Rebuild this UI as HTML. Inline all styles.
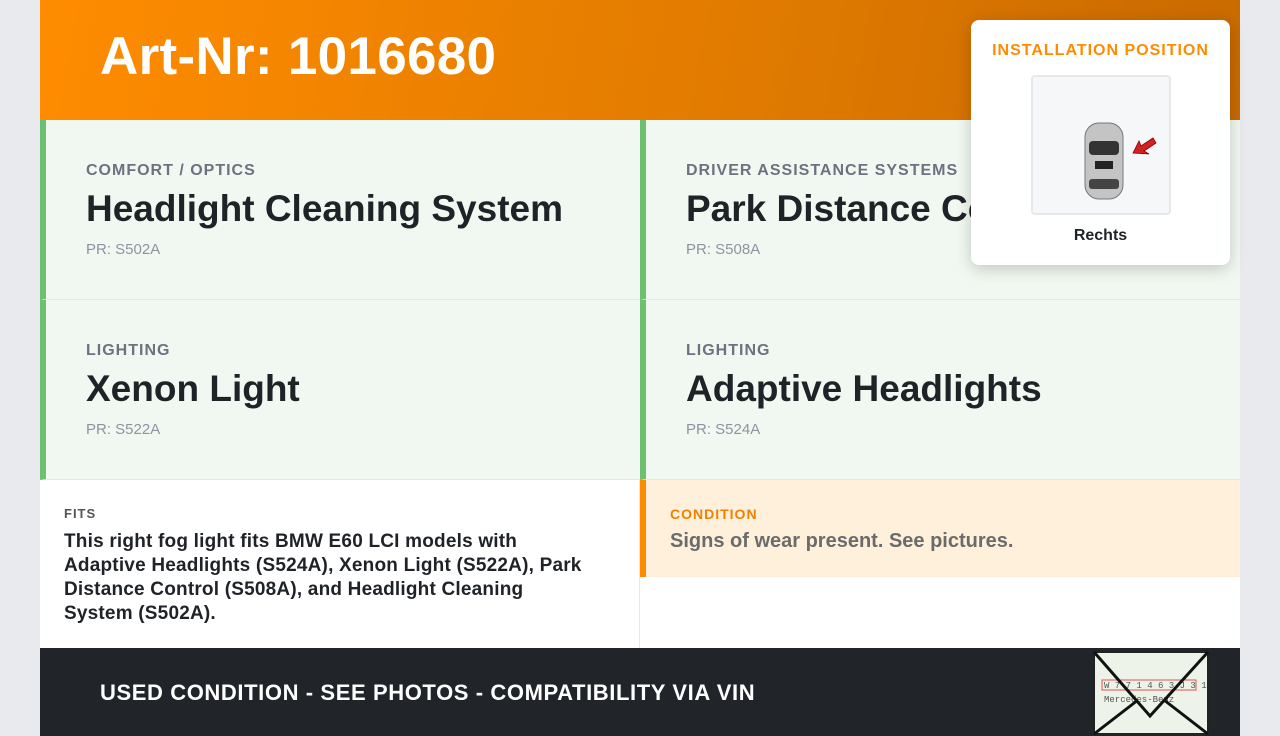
<!DOCTYPE html>
<html><head><meta charset="utf-8"><style>
*{box-sizing:border-box;margin:0;padding:0}
body{width:1280px;height:736px;background:#e9eaed;font-family:"Liberation Sans",sans-serif;overflow:hidden;position:relative}
.wrap{position:absolute;left:40px;top:0;width:1200px;height:736px;background:#fff}
.hdr{height:120px;background:linear-gradient(100deg,#ff8c00 0%,#e07a00 60%,#c96a00 100%);position:relative}
.hdr h1{position:absolute;left:60px;top:26px;color:#fff;font-size:53px;font-weight:700;letter-spacing:0.3px}
.cell{position:absolute;width:600px;height:180px;background:#f1f8f1;border-left:6px solid #6cc070;border-bottom:1px solid #e3ebe3}
.cell .cat{position:absolute;left:40px;top:42px;font-size:16px;letter-spacing:1px;color:#6b7280;font-weight:700}
.cell .t{position:absolute;left:40px;top:68px;font-size:37px;font-weight:700;color:#1f2328}
.cell .pr{position:absolute;left:40px;top:121px;font-size:15px;color:#8b95a1}
.fits{position:absolute;left:0;top:480px;width:600px;height:168px;border-right:1px solid #e5e7eb}
.fits .l{position:absolute;left:24px;top:26px;font-size:13px;letter-spacing:1px;font-weight:700;color:#555}
.fits .d{position:absolute;left:24px;top:50px;width:525px;font-size:19px;line-height:24px;font-weight:700;color:#1f2328;letter-spacing:0.2px}
.cond{position:absolute;left:600px;top:480px;width:600px;height:97px;background:#fff0dc;border-left:6px solid #ff8c00}
.cond .l{position:absolute;left:24px;top:26px;font-size:14px;letter-spacing:1px;font-weight:700;color:#f08000}
.cond .d{position:absolute;left:24px;top:50px;font-size:20px;font-weight:700;color:#6b6b6b}
.ftr{position:absolute;left:0;top:648px;width:1200px;height:88px;background:#212429}
.ftr span{position:absolute;left:60px;top:32px;color:#fff;font-size:22px;font-weight:700;letter-spacing:0.6px}
.pop{position:absolute;left:971px;top:20px;width:259px;height:245px;background:#fff;border-radius:8px;box-shadow:0 4px 16px rgba(0,0,0,.2)}
.pop .l{position:absolute;top:22px;width:100%;text-align:center;color:#ff8c00;font-weight:700;font-size:16px;letter-spacing:1px}
.pop .box{position:absolute;left:60px;top:55px;width:140px;height:140px;background:#f6f7f9;border:2px solid #e6e8eb;border-radius:4px}
.pop .r{position:absolute;top:207px;width:100%;text-align:center;font-size:16px;font-weight:700;color:#1f2328}
</style></head><body>
<div class="wrap">
<div class="hdr"><h1>Art-Nr: 1016680</h1></div>
<div class="cell" style="left:0;top:120px"><div class="cat">COMFORT / OPTICS</div><div class="t">Headlight Cleaning System</div><div class="pr">PR: S502A</div></div>
<div class="cell" style="left:600px;top:120px"><div class="cat">DRIVER ASSISTANCE SYSTEMS</div><div class="t">Park Distance Control</div><div class="pr">PR: S508A</div></div>
<div class="cell" style="left:0;top:300px"><div class="cat">LIGHTING</div><div class="t">Xenon Light</div><div class="pr">PR: S522A</div></div>
<div class="cell" style="left:600px;top:300px"><div class="cat">LIGHTING</div><div class="t">Adaptive Headlights</div><div class="pr">PR: S524A</div></div>
<div class="fits"><div class="l">FITS</div><div class="d">This right fog light fits BMW E60 LCI models with Adaptive Headlights (S524A), Xenon Light (S522A), Park Distance Control (S508A), and Headlight Cleaning System (S502A).</div></div>
<div class="cond"><div class="l">CONDITION</div><div class="d">Signs of wear present. See pictures.</div></div>
<div class="ftr"><span>USED CONDITION - SEE PHOTOS - COMPATIBILITY VIA VIN</span>
<svg style="position:absolute;left:1052px;top:2px" width="118" height="86" viewBox="0 0 118 86"><rect x="2" y="2" width="114" height="82" fill="#eef3e9" stroke="#222" stroke-width="2"/><text x="12" y="38" font-family="Liberation Mono" font-size="9" fill="#555">W 7 7 1 4 6 3 J 3 1 2 8</text><text x="12" y="52" font-family="Liberation Mono" font-size="9" fill="#555">Mercedes-Benz</text><rect x="10" y="30" width="94" height="10" fill="none" stroke="#e05050"/><path d="M2 2 L58 66 L116 2 M2 84 L46 50 M116 84 L72 50" fill="none" stroke="#111" stroke-width="3"/></svg></div>
</div>
<div class="pop"><div class="l">INSTALLATION POSITION</div>
<div class="box"><svg style="position:absolute;left:50px;top:44px" width="75" height="80" viewBox="0 0 75 80"><rect x="2" y="2" width="38" height="76" rx="14" fill="#c4c4c4" stroke="#777"/><rect x="6" y="20" width="30" height="14" rx="4" fill="#333"/><rect x="12" y="40" width="18" height="8" fill="#222"/><rect x="6" y="58" width="30" height="10" rx="3" fill="#444"/><path d="M50 32 L56 20 L58 25 L70 17 L73 22 L61 30 L66 33 Z" fill="#d42020" stroke="#8a0000" stroke-width="0.8"/></svg></div>
<div class="r">Rechts</div></div>
</body></html>
